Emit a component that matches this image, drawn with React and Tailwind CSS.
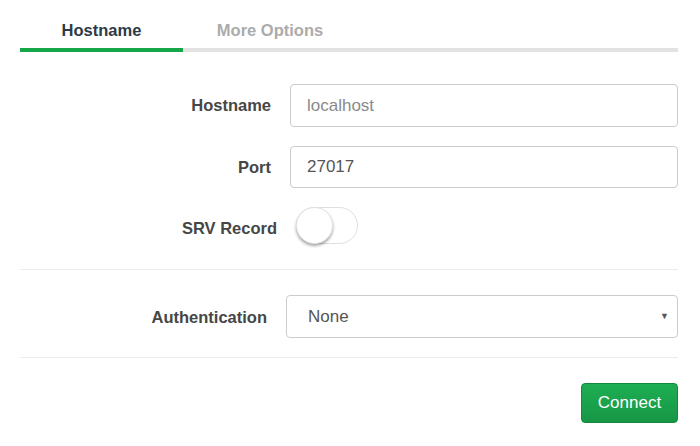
export default function App() {
  return (
    <div className="w-[700px] h-[446px] bg-white pl-[20px] pr-[22px] font-['Liberation_Sans',Arial,sans-serif] overflow-hidden">

      {/* Tabs */}
      <div className="flex h-[48px]">
        <div className="w-[163px] pt-[20px] text-center text-[16.5px] leading-[20px] font-bold text-[#2d3a47]">
          Hostname
        </div>
        <div className="w-[174px] pt-[20px] text-center text-[16.5px] leading-[20px] font-bold text-[#ababab]">
          More Options
        </div>
      </div>
      <div className="h-[4px] bg-[#e2e2e2] flex">
        <div className="w-[163px] bg-[#15a64a]" />
      </div>

      {/* Hostname */}
      <div className="flex items-center mt-[32px]">
        <label className="w-[251px] text-right text-[16.5px] font-bold text-[#464646]">Hostname</label>
        <div className="ml-[19px] flex-1 h-[43px] border border-[#cccccc] rounded-[4px] flex items-center px-[16px] text-[17px] text-[#8a8a8a]">
          localhost
        </div>
      </div>

      {/* Port */}
      <div className="flex items-center mt-[19px]">
        <label className="w-[251px] text-right text-[16.5px] font-bold text-[#464646]">Port</label>
        <div className="ml-[19px] flex-1 h-[42px] border border-[#cccccc] rounded-[4px] flex items-center px-[16px] text-[17px] text-[#555555]">
          27017
        </div>
      </div>

      {/* SRV Record */}
      <div className="flex items-center mt-[19px]">
        <label className="w-[257px] pt-[6px] text-right text-[16.5px] font-bold text-[#464646]">SRV Record</label>
        <div className="ml-[19px] w-[62px] h-[37px] rounded-full border border-[#dfdfdf] bg-white relative">
          <div className="absolute -left-px -top-px w-[37px] h-[37px] rounded-full bg-white border border-[#e2e2e2] shadow-[0_2px_3px_rgba(0,0,0,0.35)]" />
        </div>
      </div>

      <div className="mt-[25px] h-px bg-[#ececec]" />

      {/* Authentication */}
      <div className="flex items-center mt-[25px]">
        <label className="w-[247px] pt-[2px] text-right text-[16.5px] font-bold text-[#464646]">Authentication</label>
        <div className="ml-[19px] flex-1 h-[43px] border border-[#cccccc] rounded-[4px] flex items-center justify-between pl-[21px] pr-[8px] text-[17px] text-[#555555]">
          <span className="pt-[1px]">None</span>
          <span className="text-[9px] text-[#555555]">▼</span>
        </div>
      </div>

      <div className="mt-[19px] h-px bg-[#ececec]" />

      {/* Connect */}
      <div className="flex justify-end mt-[25px]">
        <button className="w-[97px] h-[40px] rounded-[4px] border border-[#15883d] bg-gradient-to-b from-[#1eae53] to-[#179645] text-white text-[17px]">
          Connect
        </button>
      </div>
    </div>
  )
}
